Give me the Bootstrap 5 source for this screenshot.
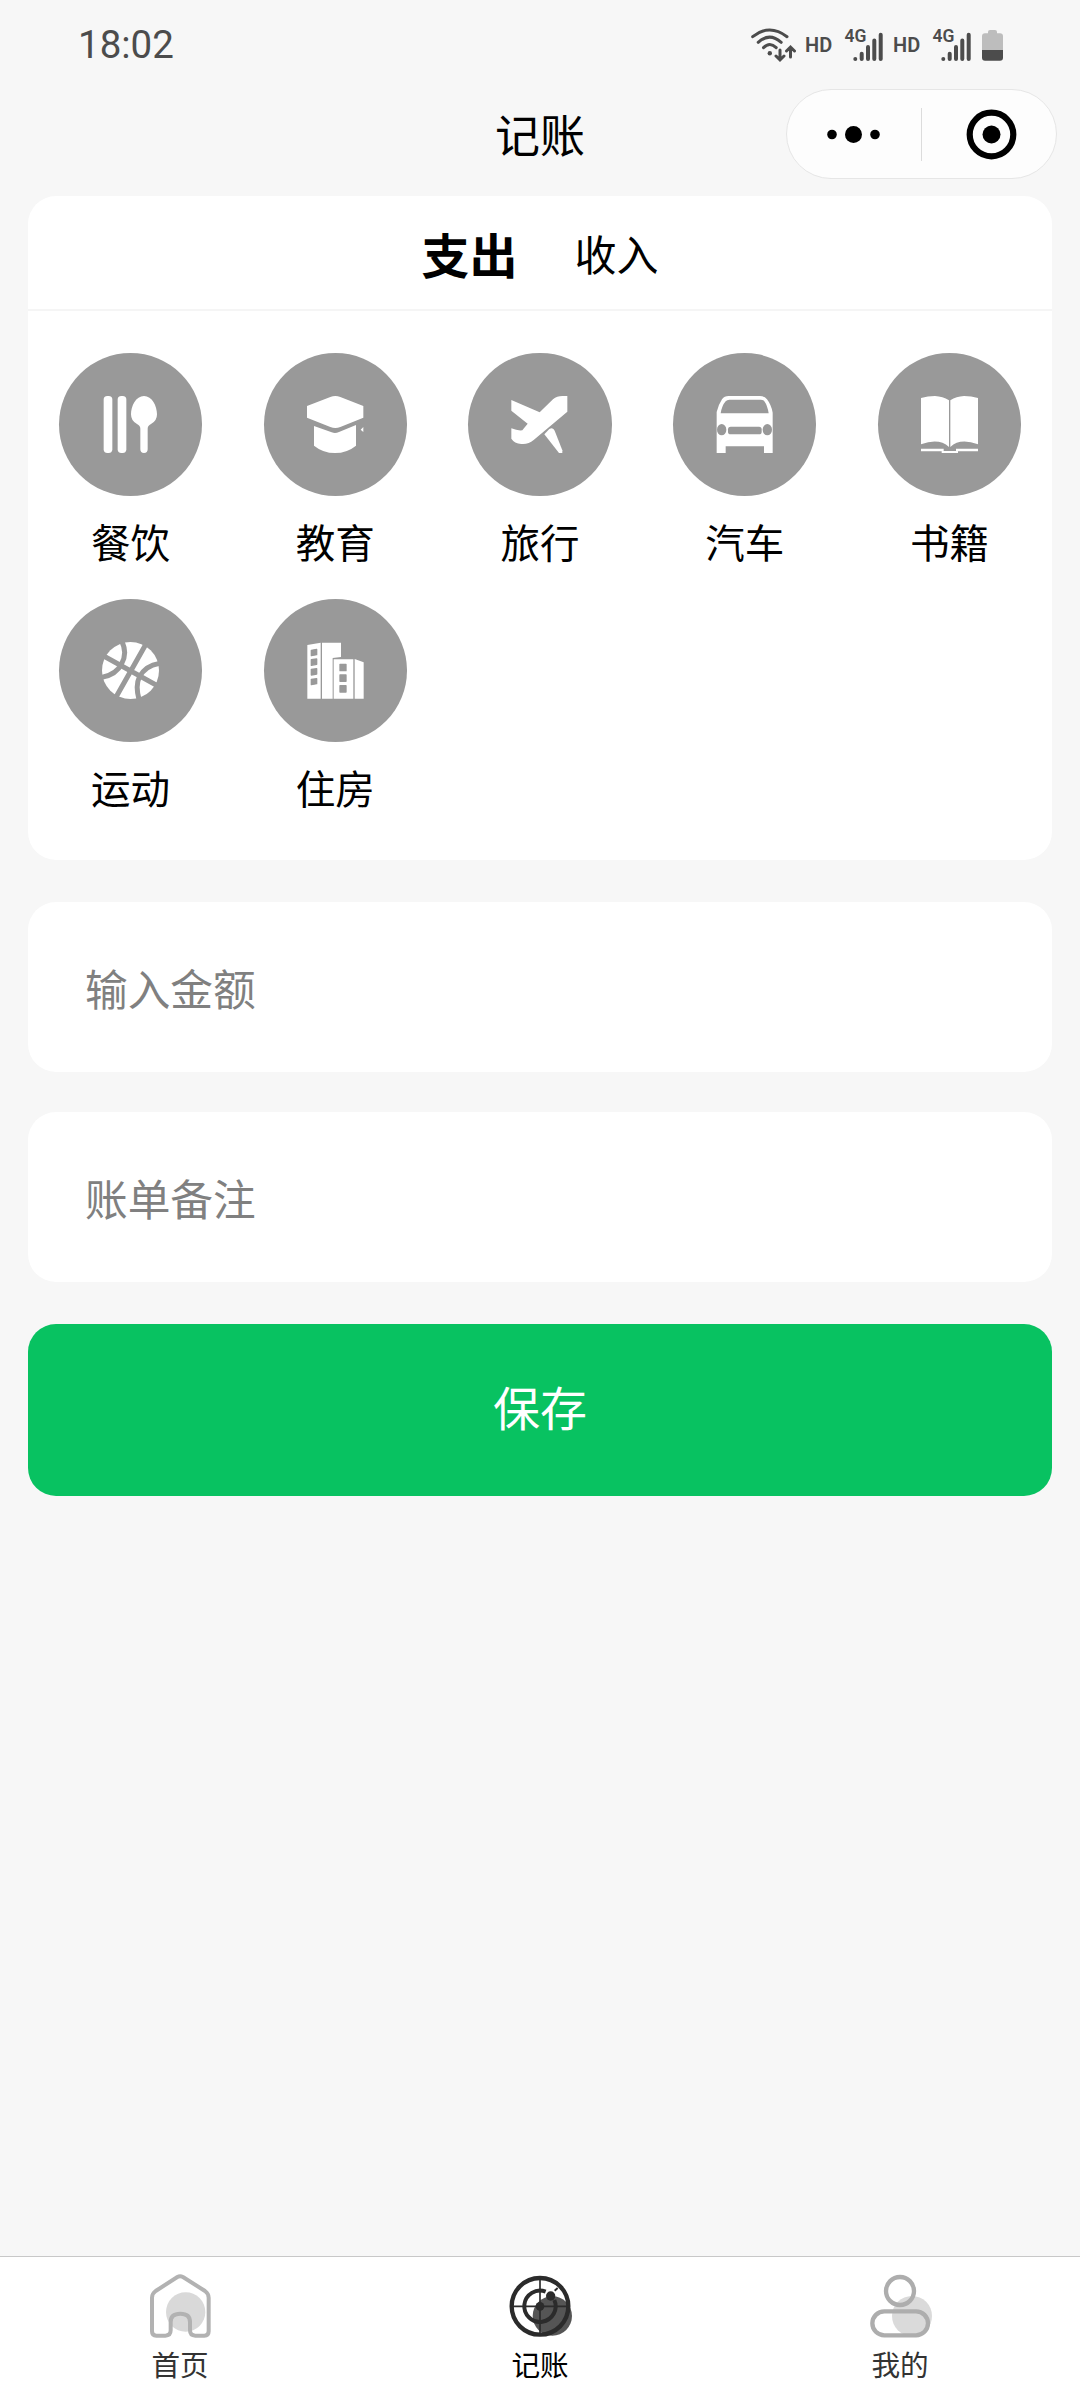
<!DOCTYPE html>
<html lang="zh-CN">
<head>
<meta charset="utf-8">
<meta name="viewport" content="width=device-width, initial-scale=1">
<title>记账</title>
<link href="https://cdn.jsdelivr.net/npm/bootstrap@5.3.0/dist/css/bootstrap.min.css" rel="stylesheet">
<style>
body{background:#f7f7f7;color:#000;font-family:"Noto Sans CJK SC",sans-serif;height:2400px;overflow:hidden}
svg{display:block;flex:none}
.status-bar{height:89px;padding:0 77px 0 78px;font-family:Roboto,sans-serif;color:#4c4c4c}
.status-bar .clock{font-size:38.5px;line-height:89px}
.status-bar .hd{font-size:20px;font-weight:600;line-height:1;width:29px;margin-left:8px;margin-right:10px}
.status-bar .hd.second{margin-left:9px}
.status-bar .sys{height:90px}
.status-bar .battery{margin-left:10px}
.title-bar{height:107px;padding-right:23px}
.title-text{font-size:45px;line-height:60px;top:15px}
.capsule{width:271px;height:90px;background:#fdfdfd;border:1px solid #e6e6e6}
.capsule .sep{width:1px;height:53px;background:#dcdcdc}
.panel{background:#fff;border:0;border-radius:28px}
.page-body{padding:0 28px}
.kind-tabs{height:115px;border-bottom:2px solid #f5f5f5;gap:57px}
.kind-tabs a{color:#000;text-decoration:none;font-size:42px;line-height:60px;padding-top:1px}
.kind-tabs a.active{font-size:48px;font-weight:700}
.cats{padding-top:42px;height:549px}
.cat{width:20%;height:246px}
.disc{width:143.4px;height:143.4px;background:#999}
.cat span{font-size:39.5px;line-height:58px;margin-top:16px}
.field{height:170px;border:0;border-radius:28px;background:#fff;padding:0 57px;font-size:42.7px;margin-bottom:40px}
.field::placeholder{color:#808080;opacity:1}
.entry{padding-top:42px}
.save{height:172px;border-radius:28px;border:0;background:#08c261;color:#fff;font-size:47px;margin-top:2px;padding:0 0 8px}
.tabbar{height:144px;background:#fff;border-top:1px solid #c8c8c8;padding-top:16px}
.tabbar a{color:#333;text-decoration:none;font-size:28.6px;line-height:40px}
.tabbar a.active{color:#000}
.tabbar span{margin-top:5px}
</style>
</head>
<body class="d-flex flex-column">
<header class="status-bar d-flex justify-content-between align-items-center">
  <div class="clock">18:02</div>
  <div class="sys d-flex align-items-center">
    <svg width="46" height="40" viewBox="0 0 46 40" fill="none" stroke="#4c4c4c" stroke-width="3" stroke-linecap="round">
      <path d="M1.7 11.7Q18.5-1.8 36 11.7M7.2 17.3Q18.5 7 30.2 17.3M12.5 22.6Q18.8 16.2 25.2 22.6M29 25V34M25 31l4 4 4-4M39.5 32V22M35.5 26l4-4 4 4"/>
      <circle cx="18.8" cy="28.3" r="2.2" fill="#4c4c4c" stroke="none"/>
    </svg>
    <span class="hd">HD</span>
    <svg width="40" height="40" viewBox="0 0 40 40"><text x="0.6" y="16.8" font-family="Roboto, sans-serif" font-weight="600" font-size="17.5" fill="#4c4c4c">4G</text><path d="M11.3 33.9v.1M17.7 28.7V34M24 22V34M30.3 15.4V34M36.7 9.8V34" stroke="#4c4c4c" stroke-width="4" stroke-linecap="round"/></svg>
    <span class="hd second">HD</span>
    <svg width="40" height="40" viewBox="0 0 40 40"><text x="0.6" y="16.8" font-family="Roboto, sans-serif" font-weight="600" font-size="17.5" fill="#4c4c4c">4G</text><path d="M11.3 33.9v.1M17.7 28.7V34M24 22V34M30.3 15.4V34M36.7 9.8V34" stroke="#4c4c4c" stroke-width="4" stroke-linecap="round"/></svg>
    <svg class="battery" width="21" height="40" viewBox="0 0 21 40">
      <path d="M6 8.3V7q0-2 2-2h5q2 0 2 2v1.300h3q3 0 3 3V25H0V11.300q0-3 3-3z" fill="#bdbdbd"/>
      <path d="M0 25h21v7.700q0 3-3 3H3q-3 0-3-3z" fill="#4c4c4c"/>
    </svg>
  </div>
</header>

<nav class="title-bar position-relative d-flex justify-content-end align-items-start">
  <div class="title-text position-absolute start-0 end-0 text-center">记账</div>
  <div class="capsule rounded-pill d-flex align-items-center position-relative">
    <svg width="134" height="88" viewBox="0 0 134 88"><circle cx="45" cy="44.500" r="4.800"/><circle cx="66.500" cy="44.500" r="8.500"/><circle cx="88" cy="44.500" r="4.800"/></svg>
    <div class="sep"></div>
    <svg width="134" height="88" viewBox="0 0 134 88"><circle cx="69.500" cy="44.500" r="21.800" fill="none" stroke="#000" stroke-width="6.200"/><circle cx="69.500" cy="44.500" r="9"/></svg>
  </div>
</nav>

<main class="page-body flex-grow-1">
  <section class="panel mb-0">
    <div class="kind-tabs d-flex justify-content-center align-items-center">
      <a href="#" class="active">支出</a>
      <a href="#">收入</a>
    </div>
    <div class="cats d-flex flex-wrap align-content-start">
      <div class="cat d-flex flex-column align-items-center">
        <div class="disc rounded-circle d-flex align-items-center justify-content-center">
          <svg width="57" height="57" viewBox="0 0 171 171" fill="#fff"><rect x="5" width="26" height="171" rx="11"/><rect x="47" width="26" height="171" rx="11"/><path d="M126 0C150 0 165 30 165 55Q165 75 147 84Q137 89 137 98V160Q137 171 126 171T115 160V98Q115 89 105 84Q87 75 87 55C87 30 102 0 126 0Z"/></svg>
        </div>
        <span>餐饮</span>
      </div>
      <div class="cat d-flex flex-column align-items-center">
        <div class="disc rounded-circle d-flex align-items-center justify-content-center">
          <svg width="57" height="57" viewBox="0 0 171 171" fill="#fff"><path d="M0 30L70 3Q85-3 100 3L169 30V65L100 93Q85 99 70 93L0 65Z"/><path d="M21 90L74 109Q85 113 96 108L147 87V149Q120 171 84 171T21 149Z"/><path d="M169 93V108L161 101Z"/></svg>
        </div>
        <span>教育</span>
      </div>
      <div class="cat d-flex flex-column align-items-center">
        <div class="disc rounded-circle d-flex align-items-center justify-content-center">
          <svg width="57" height="57" viewBox="0 0 171 171" fill="#fff"><path d="M1 12L86 49L126 10Q138 0 154 0H169V47L68 132Q52 146 31 144Q10 142 1 128V97Q20 105 34 103L50 83L1 44Z"/><path d="M100 115L115 99Q126 92 131 104L154 163V171H144Z"/></svg>
        </div>
        <span>旅行</span>
      </div>
      <div class="cat d-flex flex-column align-items-center">
        <div class="disc rounded-circle d-flex align-items-center justify-content-center">
          <svg width="57" height="57" viewBox="0 0 171 171" fill="#fff"><path fill-rule="evenodd" d="M2 171V48Q8 25 18 10Q25 0 38 0H132Q146 0 153 10Q166 27 170 50V171H144V151H29V171ZM14 52H158Q154 28 145 16Q141 11 134 11H40Q33 11 29 16Q18 28 14 52Z"/><g fill="#999"><ellipse cx="17" cy="101" rx="14" ry="17"/><ellipse cx="154" cy="101" rx="14" ry="17"/><rect x="36" y="92" width="101" height="23" rx="8"/></g></svg>
        </div>
        <span>汽车</span>
      </div>
      <div class="cat d-flex flex-column align-items-center">
        <div class="disc rounded-circle d-flex align-items-center justify-content-center">
          <svg width="57" height="57" viewBox="0 0 171 171" fill="#fff"><path d="M0 6Q20 0 42 0Q65 1 84 13V153Q54 125 0 145ZM171 6Q151 0 129 0Q106 1 88 13V153Q117 125 171 145ZM0 158H68V165H105V158H171V166H111V171H62V166H0Z"/></svg>
        </div>
        <span>书籍</span>
      </div>
      <div class="cat d-flex flex-column align-items-center">
        <div class="disc rounded-circle d-flex align-items-center justify-content-center">
          <svg width="57" height="57" viewBox="0 0 171 171"><circle cx="85.500" cy="85.500" r="85.500" fill="#fff"/><path d="M5 42L168 132M132 6L40 169M59-3Q77 32 59 65Q42 100-3 106M175 64Q132 69 112 105Q99 132 112 175" fill="none" stroke="#999" stroke-width="15"/></svg>
        </div>
        <span>运动</span>
      </div>
      <div class="cat d-flex flex-column align-items-center">
        <div class="disc rounded-circle d-flex align-items-center justify-content-center">
          <svg width="57" height="57" viewBox="0 0 171 171" fill="#fff"><path d="M1 9L41 2V170H1ZM45 2H102V45L77 48V170H45ZM80 52H139V170H80ZM143 51L170 61V170H143Z"/><path fill="#999" stroke="#999" stroke-width="4" stroke-linejoin="round" d="M13 25L29 22V38L13 41ZM13 53L29 51V67L13 70ZM13 82L29 80V96L13 99ZM13 112L29 110V125L13 128ZM99 67h18v19H99ZM99 99h18v19H99ZM99 131h18v19H99Z"/></svg>
        </div>
        <span>住房</span>
      </div>
    </div>
  </section>

  <form class="entry mb-0">
    <input class="form-control field" type="text" placeholder="输入金额">
    <input class="form-control field" type="text" placeholder="账单备注">
    <button type="button" class="btn save w-100">保存</button>
  </form>
</main>

<footer class="tabbar d-flex">
  <a href="#" class="flex-fill w-100 d-flex flex-column align-items-center">
    <svg width="66" height="66" viewBox="141 100 198 198"><circle cx="257" cy="217" r="59" fill="#d9d9d9"/><path d="M232 112Q240 108 249 112L315 154Q326 162 326 174V275Q326 288 313 288H286Q270 288 270 272V247Q270 222 241 222T212 247V272Q212 288 196 288H169Q156 288 156 275V174Q156 162 167 154Z" fill="none" stroke="#b2b2b2" stroke-width="12"/></svg>
    <span>首页</span>
  </a>
  <a href="#" class="active flex-fill w-100 d-flex flex-column align-items-center">
    <svg width="66" height="66" viewBox="141 100 198 198" fill="none" stroke="#2b2b2b"><circle cx="277" cy="229" r="59" fill="#555" stroke="none"/><circle cx="240" cy="200" r="85" stroke-width="13"/><path d="M240 115V285M155 200H325" stroke-width="5"/><path d="M283 181A47 47 0 1 1 257 156" stroke-width="12"/><path d="M284 153L293 145" stroke-width="6"/><g fill="#2b2b2b" stroke="none"><circle cx="240" cy="200" r="13"/><circle cx="272" cy="169" r="14"/></g></svg>
    <span>记账</span>
  </a>
  <a href="#" class="flex-fill w-100 d-flex flex-column align-items-center">
    <svg width="66" height="66" viewBox="141 100 198 198" fill="none" stroke="#adadad" stroke-width="13"><circle cx="276" cy="229" r="60" fill="#dadada" stroke="none"/><circle cx="240" cy="154" r="42"/><rect x="157" y="215" width="167" height="72" rx="36"/></svg>
    <span>我的</span>
  </a>
</footer>
<script src="https://cdn.jsdelivr.net/npm/bootstrap@5.3.0/dist/js/bootstrap.bundle.min.js"></script>
</body>
</html>
